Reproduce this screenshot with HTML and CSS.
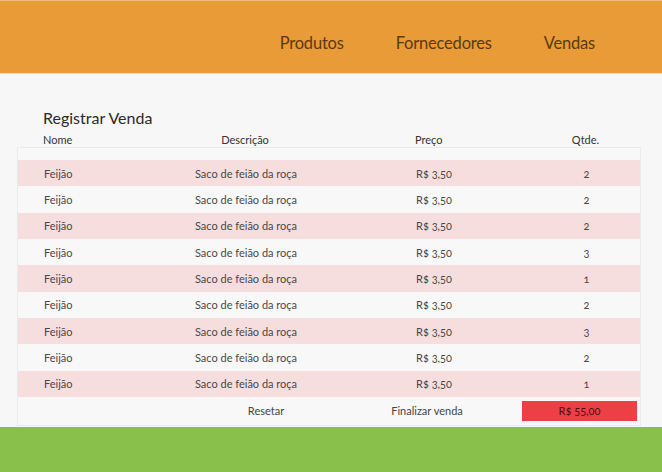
FILE: index.html
```
<!DOCTYPE html>
<html lang="pt-BR">
<head>
<meta charset="utf-8">
<title>Registrar Venda</title>
<link rel="stylesheet" href="styles.css">
</head>
<body>
<header class="top">
  <nav class="nav">
    <a class="nav-link" href="#">Produtos</a>
    <a class="nav-link" href="#">Fornecedores</a>
    <a class="nav-link" href="#">Vendas</a>
  </nav>
</header>
<main class="content">
  <h1 class="title">Registrar Venda</h1>
  <div class="cols">
    <span class="c-nome">Nome</span>
    <span class="c-desc">Descrição</span>
    <span class="c-preco">Preço</span>
    <span class="c-qtd">Qtde.</span>
  </div>
  <div class="table">
    <div class="spacer"></div>
    <div class="row pink"><span class="c-nome">Feijão</span><span class="c-desc">Saco de feião da roça</span><span class="c-preco">R$ 3,50</span><span class="c-qtd">2</span></div>
    <div class="row"><span class="c-nome">Feijão</span><span class="c-desc">Saco de feião da roça</span><span class="c-preco">R$ 3,50</span><span class="c-qtd">2</span></div>
    <div class="row pink"><span class="c-nome">Feijão</span><span class="c-desc">Saco de feião da roça</span><span class="c-preco">R$ 3,50</span><span class="c-qtd">2</span></div>
    <div class="row"><span class="c-nome">Feijão</span><span class="c-desc">Saco de feião da roça</span><span class="c-preco">R$ 3,50</span><span class="c-qtd">3</span></div>
    <div class="row pink"><span class="c-nome">Feijão</span><span class="c-desc">Saco de feião da roça</span><span class="c-preco">R$ 3,50</span><span class="c-qtd">1</span></div>
    <div class="row"><span class="c-nome">Feijão</span><span class="c-desc">Saco de feião da roça</span><span class="c-preco">R$ 3,50</span><span class="c-qtd">2</span></div>
    <div class="row pink"><span class="c-nome">Feijão</span><span class="c-desc">Saco de feião da roça</span><span class="c-preco">R$ 3,50</span><span class="c-qtd">3</span></div>
    <div class="row"><span class="c-nome">Feijão</span><span class="c-desc">Saco de feião da roça</span><span class="c-preco">R$ 3,50</span><span class="c-qtd">2</span></div>
    <div class="row pink"><span class="c-nome">Feijão</span><span class="c-desc">Saco de feião da roça</span><span class="c-preco">R$ 3,50</span><span class="c-qtd">1</span></div>
    <div class="foot">
      <span></span>
      <button class="btn-plain" type="button">Resetar</button>
      <button class="btn-plain" type="button">Finalizar venda</button>
      <button class="btn-total" type="button">R$ 55,00</button>
    </div>
  </div>
</main>
<footer class="bottom"></footer>
</body>
</html>
```
FILE: styles.css
```
* { box-sizing: border-box; }
html, body { margin: 0; padding: 0; }
body {
  font-family: Lato, "Open Sans", sans-serif;
  font-variant-numeric: oldstyle-nums;
  background: #f7f7f7;
  color: #444;
  width: 662px;
  height: 472px;
  overflow: hidden;
}
.top {
  height: 74px;
  background: #e89b36;
  border-top: 1px solid #efbb78;
  border-bottom: 1px solid #f4d9b3;
  display: flex;
  justify-content: flex-end;
  align-items: flex-start;
  padding: 32px 67px 0 0;
}
.nav { display: flex; gap: 52px; }
.nav-link {
  font-size: 16.5px;
  line-height: 20px;
  color: #5a3a12;
  text-decoration: none;
  letter-spacing: -0.2px;
}
.content {
  padding: 34px 0 1px 0;
  height: 353px;
}
.title {
  margin: 0 0 0 43px;
  font-size: 16px;
  line-height: 20px;
  font-weight: 400;
  color: #2a2a2a;
}
.cols, .row {
  display: grid;
  grid-template-columns: 133px 190px 190px 111px;
  align-items: center;
  font-size: 11px;
}
.cols {
  margin: 0 21px 0 17px;
  height: 19px;
  align-items: end;
  padding-bottom: 1px;
  color: #333;
}
.table {
  margin: 0 21px 0 17px;
  border: 1px solid #ebebeb;
  background: #f8f8f8;
}
.spacer { height: 12px; }
.row { height: 26.33px; color: #484848; }
.row.pink { background: #f6dedf; }
.c-nome { padding-left: 26px; }
.c-desc { text-align: center; }
.c-preco { padding-left: 75px; }
.c-qtd { text-align: center; }
.foot {
  height: 28px;
  display: grid;
  grid-template-columns: 182px 132px 190px 115px;
  align-items: center;
}
.btn-plain {
  border: 0;
  background: transparent;
  font: inherit;
  font-size: 11px;
  color: #444;
  text-align: center;
  padding: 0;
}
.btn-total {
  border: 0;
  background: #ee3f46;
  height: 20px;
  font: inherit;
  font-size: 11px;
  color: #4a1214;
  padding: 0;
}
.bottom {
  height: 45px;
  background: #88c04b;
}
```
